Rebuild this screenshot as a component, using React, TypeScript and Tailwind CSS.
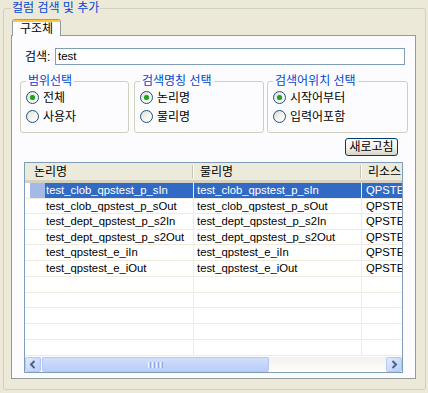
const rows = [
  ['test_clob_qpstest_p_sIn', 'test_clob_qpstest_p_sIn', 'QPSTEST'],
  ['test_clob_qpstest_p_sOut', 'test_clob_qpstest_p_sOut', 'QPSTEST'],
  ['test_dept_qpstest_p_s2In', 'test_dept_qpstest_p_s2In', 'QPSTEST'],
  ['test_dept_qpstest_p_s2Out', 'test_dept_qpstest_p_s2Out', 'QPSTEST'],
  ['test_qpstest_e_iIn', 'test_qpstest_e_iIn', 'QPSTEST'],
  ['test_qpstest_e_iOut', 'test_qpstest_e_iOut', 'QPSTEST'],
  ['', '', ''],
  ['', '', ''],
  ['', '', ''],
  ['', '', ''],
  ['', '', ''],
];

// row heights as rendered (rows are ~15.7px apart)
const rowH = [
  'h-[16px]', 'h-[15px]', 'h-[16px]', 'h-[15px]', 'h-[16px]', 'h-[16px]',
  'h-[16px]', 'h-[15px]', 'h-[16px]', 'h-[16px]', 'h-[16px]',
];

function Radio({ label, checked }: { label: string; checked?: boolean }) {
  return (
    <div className="flex h-[19px] items-center">
      <span className="flex h-[13px] w-[13px] items-center justify-center rounded-full border border-[#1c5180] bg-gradient-to-br from-[#dcdbd2] via-[#f4f4f0] to-white">
        {checked && <span className="h-[5px] w-[5px] rounded-full bg-[#21a121] shadow-[0_0_1px_#5fd35f]" />}
      </span>
      <span className="ml-[4px] leading-[14px]">{label}</span>
    </div>
  );
}

function Group({ title, width, items }: { title: string; width: string; items: [string, boolean][] }) {
  return (
    <fieldset className={`${width} h-[59px] rounded-[3px] border border-[#d0d0bf] px-[5px]`}>
      <legend className="h-[14px] px-[2px] leading-[14px] text-[#0046d5]">{title}</legend>
      {items.map(([l, c]) => (
        <Radio key={l} label={l} checked={c} />
      ))}
    </fieldset>
  );
}

function Chevron({ dir }: { dir: 'l' | 'r' }) {
  return (
    <svg width="8" height="9" viewBox="0 0 8 9">
      <polyline
        points={dir === 'l' ? '5.5,1 2,4.5 5.5,8' : '2.5,1 6,4.5 2.5,8'}
        fill="none"
        stroke="#4d6185"
        strokeWidth="2"
      />
    </svg>
  );
}

export default function App() {
  return (
    <div className="h-[393px] w-[428px] overflow-hidden bg-[#ece9d8] pl-[3px] pr-[2px] pt-[1px] font-['Liberation_Sans','Noto_Sans_CJK_KR',sans-serif] text-[12px] text-black">
      <fieldset className="h-[389px] rounded-[3px] border border-[#d0d0bf] pl-[7px] pr-[9px]">
        <legend className="h-[14px] px-[1px] leading-[14px] text-[#0046d5]">컬럼 검색 및 추가</legend>

        <div className="mt-[4px] flex">
          <div className="relative z-10 -mb-px ml-[1px] flex h-[17px] w-[49px] flex-col overflow-hidden rounded-t-[3px] border-x border-t border-x-[#919b9c] border-t-[#e68b2c] bg-[#fcfcfe]">
            <div className="h-[2px] bg-[#ffc83c]" />
            <div className="flex flex-1 items-center justify-center leading-[14px]">구조체</div>
          </div>
        </div>

        <div className="h-[344px] border border-[#919b9c] bg-[#fcfcfe]">
          <div className="mt-[12px] flex h-[17px] items-center pl-[13px]">
            <span className="w-[30px] leading-[14px]">검색:</span>
            <div className="flex h-[17px] w-[350px] items-center border border-[#7f9db9] bg-white px-[2px] text-[11.5px]">
              test
            </div>
          </div>

          <div className="mt-[9px] flex pl-[8px]">
            <Group title="범위선택" width="w-[109px]" items={[['전체', true], ['사용자', false]]} />
            <div className="ml-[5px]">
              <Group title="검색명칭 선택" width="w-[130px]" items={[['논리명', true], ['물리명', false]]} />
            </div>
            <div className="ml-[3px]">
              <Group title="검색어위치 선택" width="w-[141px]" items={[['시작어부터', true], ['입력어포함', false]]} />
            </div>
          </div>

          <div className="mt-[5px] flex justify-end pr-[17px]">
            <button className="flex h-[18px] w-[53px] items-center justify-center rounded-[3px] border border-[#003c74] bg-gradient-to-b from-white via-[#f4f3ee] to-[#d8d4c8] leading-[14px]">
              새로고침
            </button>
          </div>

          <div className="ml-[12px] mt-[6px] h-[211px] w-[379px] overflow-hidden border border-[#7f9db9] bg-white">
            <div className="flex h-[20px] border-b-[3px] border-[#d6d2c2] bg-[#ebeadb] leading-[14px]">
              <div className="flex w-[169px] items-center pl-[9px]">
                <span className="flex-1">논리명</span>
                <span className="h-[13px] w-px bg-[#c7c5b2]" />
                <span className="h-[13px] w-px bg-white" />
              </div>
              <div className="flex w-[168px] items-center pl-[6px]">
                <span className="flex-1">물리명</span>
                <span className="h-[13px] w-px bg-[#c7c5b2]" />
                <span className="h-[13px] w-px bg-white" />
              </div>
              <div className="flex flex-1 items-center overflow-hidden whitespace-nowrap pl-[6px]">리소스</div>
            </div>

            {rows.map((r, i) => {
              const sel = i === 0;
              const cellText = sel ? 'bg-[#316ac5] text-white' : '';
              return (
                <div key={i} className={`flex ${rowH[i]} border-b border-[#efebde] text-[11.3px]`}>
                  <div className="flex w-[169px] border-r border-[#efebde]">
                    <span className="w-[5px]" />
                    <span className={`w-[15px] ${sel ? 'bg-[#a4b9e6]' : ''}`} />
                    <span className={`flex flex-1 items-center whitespace-nowrap pl-[1px] ${cellText}`}>{r[0]}</span>
                  </div>
                  <div className={`flex w-[168px] items-center whitespace-nowrap border-r border-[#efebde] pl-[3px] ${cellText}`}>
                    {r[1]}
                  </div>
                  <div className={`flex flex-1 items-center overflow-hidden whitespace-nowrap pl-[4px] ${cellText}`}>
                    {r[2]}
                  </div>
                </div>
              );
            })}

            <div className="mt-[1px] flex h-[15px] bg-gradient-to-b from-[#f3f1ec] to-[#fefefb]">
              <div className="flex w-[16px] items-center justify-center rounded-[2px] border border-[#b4c8f6] bg-gradient-to-br from-[#e1eafe] to-[#b9cdfa]">
                <Chevron dir="l" />
              </div>
              <div className="ml-[1px] flex w-[227px] items-center justify-center gap-[1px] rounded-[2px] border border-[#b4c8f6] bg-gradient-to-b from-[#d1defd] to-[#b9cdfa]">
                <span className="h-[6px] w-px bg-[#eef4fe]" />
                <span className="h-[6px] w-px bg-[#8caaeb]" />
                <span className="h-[6px] w-px bg-[#eef4fe]" />
                <span className="h-[6px] w-px bg-[#8caaeb]" />
                <span className="h-[6px] w-px bg-[#eef4fe]" />
                <span className="h-[6px] w-px bg-[#8caaeb]" />
                <span className="h-[6px] w-px bg-[#eef4fe]" />
                <span className="h-[6px] w-px bg-[#8caaeb]" />
              </div>
              <div className="flex-1" />
              <div className="flex w-[16px] items-center justify-center rounded-[2px] border border-[#b4c8f6] bg-gradient-to-br from-[#e1eafe] to-[#b9cdfa]">
                <Chevron dir="r" />
              </div>
            </div>
          </div>
        </div>
      </fieldset>
    </div>
  );
}
